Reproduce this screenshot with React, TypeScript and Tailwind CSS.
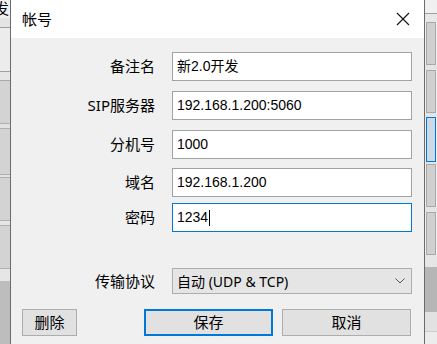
import React from 'react';

const cjk = { fontFamily: '"Noto Sans", "Noto Sans CJK SC", sans-serif' };
const field = { fontFamily: '"Liberation Sans", "Noto Sans CJK SC", sans-serif' };

function LeftBackdrop() {
  return (
    <div className="flex w-[10px] shrink-0 flex-col bg-[#f0f0f0]">
      <div className="relative h-[18px] overflow-hidden bg-[#f0f0f0]">
        <span className="absolute left-[-6px] top-[-1px] text-[15px] leading-[18px] text-black" style={cjk}>发</span>
      </div>
      <div className="h-[10px] border-b border-[#a0a0a0] bg-[#e4e4e4]" />
      <div className="h-[44px] border-b border-[#a0a0a0] bg-[#ececec]" />
      <div className="h-[9px] border-b border-[#a8a8a8] bg-[#e6e6e6]" />
      <div className="h-[42px] bg-[#d3d3d3]" />
      <div className="h-[6px] border-y border-[#b0b0b0] bg-[#e2e2e2]" />
      <div className="h-[45px] bg-[#d3d3d3]" />
      <div className="h-[4px] border-y border-[#b0b0b0] bg-[#e2e2e2]" />
      <div className="h-[42px] bg-[#d3d3d3]" />
      <div className="h-[6px] border-y border-[#b0b0b0] bg-[#e6e6e6]" />
      <div className="h-[42px] bg-[#d3d3d3]" />
      <div className="h-[13px] border-t border-[#b0b0b0] bg-[#e6e6e6]" />
      <div className="flex-1 bg-[#bdbdbd]" />
    </div>
  );
}

function RightBackdrop() {
  const cell = 'mx-[1px] border border-[#a8a8a8] bg-[#cfcfcf]';
  return (
    <div className="flex w-[12px] shrink-0 flex-col bg-[#f0f0f0]">
      <div className="h-[14px] border-b border-[#a0a0a0] bg-[#f0f0f0]" />
      <div className="h-[8px] bg-[#e8e8e8]" />
      <div className={`h-[43px] ${cell}`} />
      <div className="h-[5px] bg-[#e4e4e4]" />
      <div className={`h-[43px] ${cell}`} />
      <div className="h-[4px] bg-[#e4e4e4]" />
      <div className="mx-[1px] h-[45px] border border-[#0078d7] bg-[#cddae6]" />
      <div className="h-[2px] bg-[#e4e4e4]" />
      <div className={`h-[43px] ${cell}`} />
      <div className="h-[5px] bg-[#e4e4e4]" />
      <div className={`h-[43px] ${cell}`} />
      <div className="h-[12px] bg-[#e6e6e6]" />
      <div className="h-[45px] bg-[#b6b6b6]" />
      <div className="h-[20px] border-b border-[#cccccc] bg-[#e2e2e2]" />
      <div className="flex-1 bg-[#ececec]" />
    </div>
  );
}

function Row({ label, value, focused, className }: { label: string; value: string; focused?: boolean; className?: string }) {
  return (
    <div className={`flex items-center ${className ?? ''}`}>
      <div className="w-[145px] pr-px text-right text-[15px] leading-none text-black" style={cjk}>{label}</div>
      <div
        className={`ml-[16px] flex h-[29px] w-[240px] items-center border bg-white pl-[4px] text-[14px] text-black ${focused ? 'border-[#0078d7]' : 'border-[#a3a3a3]'}`}
        style={field}
      >
        {value}
        {focused && <span className="ml-px inline-block h-[16px] w-px bg-black" />}
      </div>
    </div>
  );
}

export default function App() {
  return (
    <div className="flex h-[344px] w-[437px] overflow-hidden bg-[#f0f0f0]">
      <LeftBackdrop />
      <div className="flex w-[415px] shrink-0 flex-col border-x border-[#6b6b6b]">
        <div className="flex h-[38px] items-center justify-between bg-white pl-[11px] pr-[13px]">
          <span className="text-[15px] text-black" style={cjk}>帐号</span>
          <svg width="14" height="14" viewBox="0 0 14 14" className="mr-[1px]">
            <path d="M1 1 L13 13 M13 1 L1 13" stroke="#111" strokeWidth="1.1" fill="none" />
          </svg>
        </div>
        <div className="flex flex-1 flex-col bg-[#f0f0f0] pt-[14px]">
          <Row label="备注名" value="新2.0开发" />
          <Row label="SIP服务器" value="192.168.1.200:5060" className="mt-[10px]" />
          <Row label="分机号" value="1000" className="mt-[10px]" />
          <Row label="域名" value="192.168.1.200" className="mt-[9px]" />
          <Row label="密码" value="1234" focused className="mt-[6px]" />

          <div className="mt-[36px] flex items-center">
            <div className="w-[145px] pr-px text-right text-[15px] leading-none text-black" style={cjk}>传输协议</div>
            <div
              className="ml-[16px] flex h-[26px] w-[240px] items-center justify-between border border-[#adadad] bg-[#e5e5e5] pl-[4px] pr-[5px] text-[14px] text-black"
              style={cjk}
            >
              <span>自动 (UDP &amp; TCP)</span>
              <svg width="12" height="8" viewBox="0 0 12 8">
                <path d="M1.5 1.5 L6 6 L10.5 1.5" stroke="#555" strokeWidth="1" fill="none" />
              </svg>
            </div>
          </div>

          <div className="mt-[15px] flex items-center pl-[11px]">
            <button className="flex h-[27px] w-[55px] items-center justify-center border border-[#adadad] bg-[#e1e1e1] text-[15px] text-black" style={cjk}>删除</button>
            <button className="ml-[67px] flex h-[27px] w-[129px] items-center justify-center border-2 border-[#0078d7] bg-[#e1e1e1] text-[15px] text-black" style={cjk}>保存</button>
            <button className="ml-[9px] flex h-[27px] w-[129px] items-center justify-center border border-[#adadad] bg-[#e1e1e1] text-[15px] text-black" style={cjk}>取消</button>
          </div>
        </div>
      </div>
      <RightBackdrop />
    </div>
  );
}
